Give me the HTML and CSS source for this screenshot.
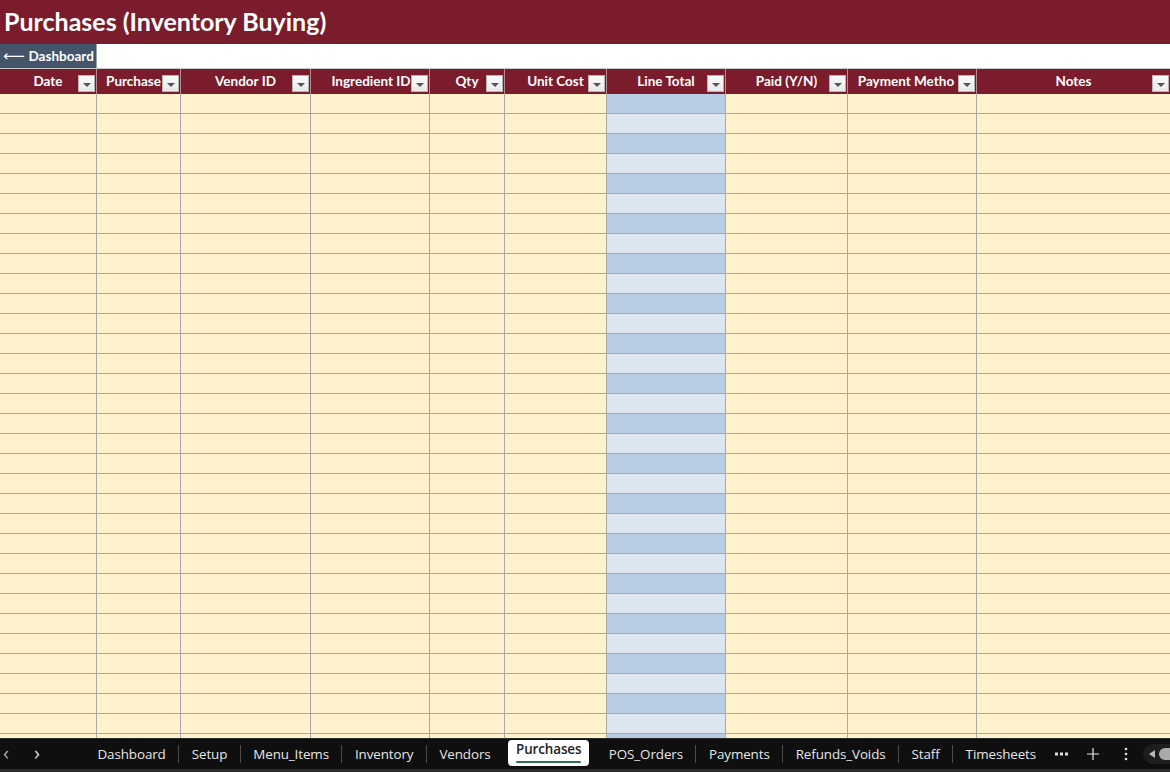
FILE: index.html
```html
<!DOCTYPE html>
<html>
<head>
<meta charset="utf-8">
<link rel="stylesheet" href="styles.css">
</head>
<body>
<div class="sheet">
  <div class="title-bar"><h1 class="title">Purchases (Inventory Buying)</h1></div>
  <div class="nav-row"><button class="back-btn"><span class="arrow">⟵</span><span>Dashboard</span></button></div>
  <div class="grid-head">
    <div class="hcell c1"><span class="htext">Date</span><span class="dd"></span></div>
    <div class="hcell c2"><span class="htext">Purchase</span><span class="dd"></span></div>
    <div class="hcell c3"><span class="htext">Vendor ID</span><span class="dd"></span></div>
    <div class="hcell c4"><span class="htext">Ingredient ID</span><span class="dd"></span></div>
    <div class="hcell c5"><span class="htext">Qty</span><span class="dd"></span></div>
    <div class="hcell c6"><span class="htext">Unit Cost</span><span class="dd"></span></div>
    <div class="hcell c7"><span class="htext">Line Total</span><span class="dd"></span></div>
    <div class="hcell c8"><span class="htext">Paid (Y/N)</span><span class="dd"></span></div>
    <div class="hcell c9"><span class="htext">Payment Metho</span><span class="dd"></span></div>
    <div class="hcell c10"><span class="htext">Notes</span><span class="dd"></span></div>
  </div>
  <div class="grid-body">
    <div class="col c1"></div>
    <div class="col c2"></div>
    <div class="col c3"></div>
    <div class="col c4"></div>
    <div class="col c5"></div>
    <div class="col c6"></div>
    <div class="col c7 calc"></div>
    <div class="col c8"></div>
    <div class="col c9"></div>
    <div class="col c10"></div>
  </div>
  <div class="tab-bar">
    <div class="scroll-arrows"><span class="arr">&lsaquo;</span><span class="arr">&rsaquo;</span></div>
    <div class="tabs">
      <span class="tab">Dashboard</span><span class="sep"></span>
      <span class="tab">Setup</span><span class="sep"></span>
      <span class="tab">Menu_Items</span><span class="sep"></span>
      <span class="tab">Inventory</span><span class="sep"></span>
      <span class="tab">Vendors</span>
      <span class="tab active">Purchases</span>
      <span class="tab">POS_Orders</span><span class="sep"></span>
      <span class="tab">Payments</span><span class="sep"></span>
      <span class="tab">Refunds_Voids</span><span class="sep"></span>
      <span class="tab">Staff</span><span class="sep"></span>
      <span class="tab">Timesheets</span>
    </div>
    <div class="tab-tools">
      <svg class="more" width="14" height="4" viewBox="0 0 14 4"><rect x="0" y="0.5" width="3" height="3" fill="#ddd"/><rect x="5" y="0.5" width="3" height="3" fill="#ddd"/><rect x="10" y="0.5" width="3" height="3" fill="#ddd"/></svg>
      <svg class="plus" width="12" height="12" viewBox="0 0 12 12"><path d="M6 0v12M0 6h12" stroke="#e8e8e8" stroke-width="1.2"/></svg>
      <svg class="kebab" width="4" height="14" viewBox="0 0 4 14"><circle cx="2" cy="2" r="1.3" fill="#ddd"/><circle cx="2" cy="7" r="1.3" fill="#ddd"/><circle cx="2" cy="12" r="1.3" fill="#ddd"/></svg>
      <div class="hscroll"><svg width="10" height="10" viewBox="0 0 10 10"><path d="M8 1L2 5l6 4z" fill="#bbb"/></svg><span class="thumb"></span></div>
    </div>
  </div>
</div>
</body>
</html>
```

FILE: styles.css
```css
* { box-sizing: border-box; }
html, body { margin: 0; padding: 0; }
body { width: 1170px; height: 772px; overflow: hidden; background: #fff; font-family: Lato, "Open Sans", sans-serif; }

.sheet { display: flex; flex-direction: column; height: 772px; }

.title-bar { height: 44px; background: #7B1C2C; display: flex; align-items: center; padding-left: 4px; flex-shrink: 0; }
.title { margin: 0; color: #fff; font-family: Lato, sans-serif; font-weight: 700; font-size: 25px; line-height: 1; padding-bottom: 2px; }

.nav-row { height: 24px; background: #fff; display: flex; flex-shrink: 0; }
.back-btn { width: 97px; height: 24px; background: #44546A; color: #fff; border: none; border-right: 1px solid #9aa3ad; padding: 0 0 0 3px; margin: 0; font-family: Lato, sans-serif; font-weight: 700; font-size: 13.5px; text-align: left; display: flex; align-items: center; gap: 4px; }
.back-btn .arrow { font-weight: 400; font-size: 15px; font-family: "DejaVu Sans", sans-serif; }

.grid-head, .grid-body { display: grid; grid-template-columns: 97px 84px 130px 119px 75px 102px 119px 122px 129px 193px; }

.grid-head { height: 26px; background: #7B1C2C; border-top: 1px solid #c9c9c9; flex-shrink: 0; }
.hcell { position: relative; display: flex; align-items: center; justify-content: center; overflow: hidden; border-right: 1px solid #b98a92; padding-bottom: 1px; }
.htext { color: #fff; font-family: Lato, sans-serif; font-weight: 700; font-size: 13.5px; white-space: nowrap; }
.hcell.c2 .htext { margin-right: 10px; }
.hcell.c4 .htext { margin-left: 2px; }
.hcell.c9 .htext { margin-right: 12px; }
.hcell.c10 { border-right: none; }
.dd { position: absolute; right: 1px; top: 6px; width: 17px; height: 17px; background: linear-gradient(#fbfbfb, #e9e9e9); border: 1px solid #b5b5b5; z-index: 1; }
.dd::after { content: ""; position: absolute; left: 4px; top: 7px; border-left: 4px solid transparent; border-right: 4px solid transparent; border-top: 4px solid #555; }

.grid-body { flex: 1; overflow: hidden; }
.col { border-right: 1px solid #a9a9a9; background: repeating-linear-gradient(to bottom, #FFF2CC 0 19px, #a9a9a9 19px 20px); }
.col.c10 { border-right: none; }
.col.calc { background: repeating-linear-gradient(to bottom, #B8CCE4 0 19px, #a9a9a9 19px 20px, #DCE6F1 20px 39px, #a9a9a9 39px 40px); }

.tab-bar { height: 34px; flex-shrink: 0; background: #0f0f0f; border-top: 1px solid #2a2a2a; border-bottom: 3px solid #2b2b2b; display: flex; align-items: center; font-family: "Open Sans", sans-serif; font-size: 13.4px; color: #e6e6e6; }
.scroll-arrows { width: 85px; flex-shrink: 0; display: flex; gap: 25px; padding-left: 3px; color: #aaa; font-size: 20px; line-height: 1; padding-bottom: 3px; }
.scroll-arrows .arr:last-child { color: #ddd; }
.tabs { display: flex; align-items: center; height: 100%; flex-shrink: 0; }
.tab { padding: 0 12.5px; white-space: nowrap; letter-spacing: -0.1px; }
.sep { width: 1px; height: 18px; background: #4a4a4a; }
.tab.active { background: #fff; color: #222; height: 26px; margin: 1px 7px 0 5px; padding: 0 8px 6px; border-radius: 4px; display: flex; align-items: center; position: relative; font-weight: 600; align-self: flex-start; line-height: 1; }
.tab.active::after { content: ""; position: absolute; left: 8px; right: 8px; bottom: 3px; height: 2px; background: #2f6b55; border-radius: 1px; }
.tab-tools { display: flex; align-items: center; margin-left: 6px; flex-shrink: 0; }
.more { flex-shrink: 0; margin-right: 18px; }
.plus { flex-shrink: 0; }
.kebab { margin-left: 25px; flex-shrink: 0; }
.hscroll { margin-left: 15px; height: 20px; width: 30px; background: #1e1e1e; border-radius: 10px 0 0 10px; display: flex; align-items: center; padding-left: 4px; gap: 2px; flex-shrink: 0; }
.thumb { width: 14px; height: 12px; background: #aaa; border-radius: 6px 0 0 6px; }
```
